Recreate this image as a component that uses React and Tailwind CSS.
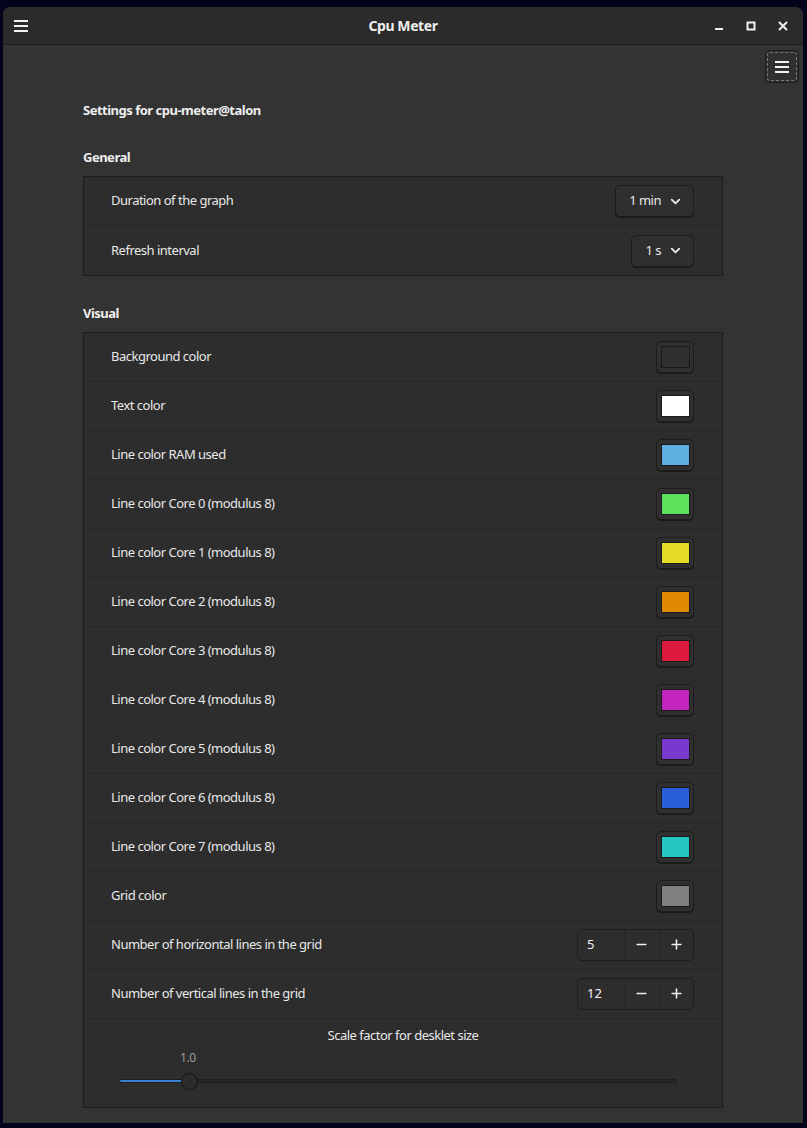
import React from 'react';
import { ChevronDown, Minus, Plus } from 'lucide-react';

const font = { fontFamily: '"Noto Sans", "Open Sans", sans-serif' };

const swatches = [
  { label: 'Background color', color: '#2f2f2f' },
  { label: 'Text color', color: '#ffffff' },
  { label: 'Line color RAM used', color: '#5eaee0' },
  { label: 'Line color Core 0 (modulus 8)', color: '#5fe05c' },
  { label: 'Line color Core 1 (modulus 8)', color: '#e5dc26' },
  { label: 'Line color Core 2 (modulus 8)', color: '#df8a00' },
  { label: 'Line color Core 3 (modulus 8)', color: '#dc1a3e' },
  { label: 'Line color Core 4 (modulus 8)', color: '#c224bd' },
  { label: 'Line color Core 5 (modulus 8)', color: '#7b38cf' },
  { label: 'Line color Core 6 (modulus 8)', color: '#2a5fdc' },
  { label: 'Line color Core 7 (modulus 8)', color: '#26c6c4' },
  { label: 'Grid color', color: '#808080' },
];

const Row = ({ label, children, last }) => (
  <div className={`flex h-[49px] items-center justify-between pl-[27px] pr-[28px] ${last ? '' : 'border-b border-[#272727]'}`}>
    <span className="text-[13px] tracking-[-0.5px] text-[#e8e8e8]">{label}</span>
    {children}
  </div>
);

const Combo = ({ value }) => (
  <button className="flex h-[32px] items-center gap-[7px] rounded-[5px] border border-[#1d1d1d] bg-[#2f2f2f] pl-[13px] pr-[10px] text-[13px] tracking-[-0.5px] text-[#e8e8e8] shadow-[0_1px_0_#1a1a1a]">
    {value}
    <ChevronDown size={15} strokeWidth={3} />
  </button>
);

const ColorButton = ({ color }) => (
  <div className="flex h-[32px] w-[38px] items-center justify-center rounded-[5px] border border-[#1d1d1d] bg-[#2f2f2f] shadow-[0_1px_0_#1a1a1a]">
    <div
      className="h-[22px] w-[29px] border border-[#1a1a1a]"
      style={{ backgroundColor: color }}
    />
  </div>
);

const Spin = ({ value }) => (
  <div className="flex h-[32px] w-[117px] rounded-[5px] border border-[#1d1d1d] bg-[#2d2d2d] text-[#f0f0f0]">
    <div className="flex w-[47px] items-center pl-[9px] text-[13px]">{value}</div>
    <div className="flex w-[35px] items-center justify-center border-l border-[#262626]">
      <Minus size={15} strokeWidth={2.5} />
    </div>
    <div className="flex w-[35px] items-center justify-center border-l border-[#262626]">
      <Plus size={15} strokeWidth={2.5} />
    </div>
  </div>
);

const Hamburger = () => (
  <svg width="14" height="12" viewBox="0 0 14 12">
    <rect x="0" y="0" width="14" height="2" fill="#f2f2f2" />
    <rect x="0" y="5" width="14" height="2" fill="#f2f2f2" />
    <rect x="0" y="10" width="14" height="2" fill="#f2f2f2" />
  </svg>
);

export default function App() {
  return (
    <div className="h-[1128px] w-[807px] overflow-hidden bg-[#03031c] pl-[3px] pt-[7px]" style={font}>
      <div className="flex h-[1116px] w-[800px] flex-col overflow-hidden rounded-t-[8px] bg-[#333333]">
        {/* title bar */}
        <div className="grid h-[38px] shrink-0 grid-cols-[1fr_auto_1fr] items-center border-b border-[#1b1b1b] bg-[#2b2b2b] px-[11px]">
          <Hamburger />
          <span className="text-[14px] font-bold tracking-[-0.4px] text-[#eeeeee]">Cpu Meter</span>
          <div className="flex items-center justify-end gap-[22px] pr-[4px]">
            <svg width="10" height="10" viewBox="0 0 10 10">
              <rect x="1" y="7" width="8" height="2" fill="#f0f0f0" />
            </svg>
            <svg width="10" height="10" viewBox="0 0 10 10">
              <rect x="1.5" y="1.5" width="7" height="7" fill="none" stroke="#f0f0f0" strokeWidth="2" />
            </svg>
            <svg width="10" height="10" viewBox="0 0 10 10">
              <path d="M1 1 L9 9 M9 1 L1 9" stroke="#f0f0f0" strokeWidth="2" />
            </svg>
          </div>
        </div>

        {/* content */}
        <div className="relative flex-1 px-[80px] pt-[56px]">
          <button className="absolute right-[4px] top-[5px] flex h-[33px] w-[34px] items-center justify-center rounded-[5px] border border-[#1d1d1d] bg-[#303030] outline-1 outline-dashed outline-offset-[-3px] outline-[#777]">
            <Hamburger />
          </button>

          <h1 className="text-[13px] font-bold tracking-[-0.5px] text-[#eeeeee]">Settings for cpu-meter@talon</h1>

          <h2 className="mt-[27px] text-[13px] font-bold tracking-[-0.5px] text-[#eeeeee]">General</h2>
          <div className="mt-[9px] w-[640px] border border-[#1c1c1c] bg-[#2d2d2d]">
            <Row label="Duration of the graph">
              <Combo value="1 min" />
            </Row>
            <Row label="Refresh interval" last>
              <Combo value="1 s" />
            </Row>
          </div>

          <h2 className="mt-[28px] text-[13px] font-bold tracking-[-0.5px] text-[#eeeeee]">Visual</h2>
          <div className="mt-[8px] w-[640px] border border-[#1c1c1c] bg-[#2d2d2d]">
            {swatches.map((s) => (
              <Row key={s.label} label={s.label}>
                <ColorButton color={s.color} />
              </Row>
            ))}
            <Row label="Number of horizontal lines in the grid">
              <Spin value="5" />
            </Row>
            <Row label="Number of vertical lines in the grid">
              <Spin value="12" />
            </Row>
            <div className="flex h-[88px] flex-col items-center pt-[7px]">
              <span className="text-[13px] tracking-[-0.5px] text-[#e8e8e8]">Scale factor for desklet size</span>
              <div className="relative mr-[10px] mt-[4px] w-[558px]">
                <span className="absolute left-[61px] top-0 text-[12px] tracking-[-0.4px] text-[#9a9a9a]">1.0</span>
                <div className="pt-[30px]">
                  <div className="h-[4px] w-full rounded-full border border-[#1e1e1e] bg-[#262626]">
                    <div className="h-full w-[70px] rounded-full bg-[#3a7fd4]" />
                  </div>
                </div>
                <div className="absolute left-[62px] top-[24px] h-[17px] w-[17px] rounded-full border border-[#111] bg-[#2c2c2c]" />
              </div>
            </div>
          </div>
        </div>
      </div>
    </div>
  );
}
